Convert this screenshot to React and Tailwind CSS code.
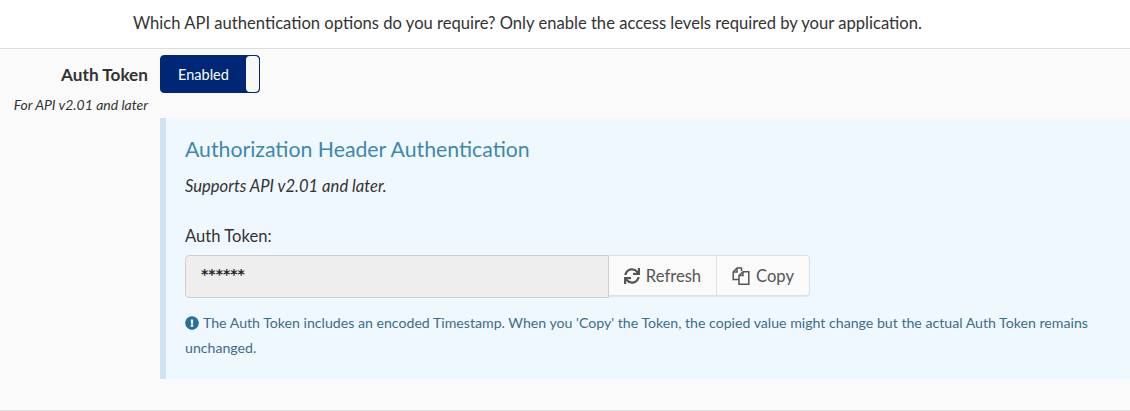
import React from 'react';
import { FaSync, FaExclamationCircle } from 'react-icons/fa';

function CopyIcon() {
  return (
    <svg width="18" height="18" viewBox="0 0 18 18" fill="none" stroke="currentColor" strokeWidth="1.5" className="shrink-0">
      <path d="M7 12.5H1.2V5L5 1h4.5v3" />
      <path d="M5 1.2V5H1.2" />
      <path d="M11 4.7h5.8v12.6H7V8.5z" />
      <path d="M11 4.9v3.6H7.2" />
    </svg>
  );
}

function App() {
  return (
    <div className="w-[1130px] h-[411px] bg-white overflow-hidden text-[#333] font-['Lato','Noto_Sans',sans-serif]">
      <div className="h-[49px] border-b border-[#dcdcdc] pl-[133px] pt-[12px] text-[16.6px] leading-[22px] text-[#333]">
        Which API authentication options do you require? Only enable the access levels required by your application.
      </div>
      <div className="h-[362px] bg-[#fafafa] border-b border-[#dcdcdc] flex">
        <div className="w-[148px] shrink-0 text-right">
          <div className="mt-[15px] text-[17.2px] leading-[22px] font-bold">Auth Token</div>
          <div className="mt-[10px] text-[14px] leading-[18px] italic">For API v2.01 and later</div>
        </div>
        <div className="flex-1 ml-[12px] pt-[6px]">
          <div className="w-[100px] h-[38px] flex rounded border border-[#002776] bg-[#002776] overflow-hidden">
            <div className="flex-1 text-white text-[14.5px] leading-[38px] text-center">Enabled</div>
            <div className="w-[13px] bg-[#f8f8f8] rounded"></div>
          </div>
          <div className="mt-[25px] h-[261px] border-l-[6px] border-[#cfe3f2] bg-[#f0f8ff] pl-[19px] pt-[18px]">
            <h4 className="text-[21.25px] leading-[26px] text-[#3f88ab]">Authorization Header Authentication</h4>
            <p className="mt-[13px] text-[16.6px] leading-[22px] italic">Supports API v2.01 and later.</p>
            <label className="block mt-[28px] text-[16.6px] leading-[22px]">Auth Token:</label>
            <div className="mt-[8px] flex items-stretch h-[43px]">
              <div className="w-[424px] h-[43px] bg-[#eeeeee] border border-[#cfcfcf] rounded-l pl-[15px] pt-[9px] text-[14px] leading-[18px] font-['DejaVu_Sans',sans-serif] font-bold text-[#222]">******</div>
              <div className="h-[41px] flex bg-[#fafafa] border border-[#dfdfdf] border-l-0 rounded-r shadow-[0_1px_1px_rgba(0,0,0,0.08)] text-[#555] text-[16.6px]">
                <div className="w-[108px] pt-[1px] flex items-center justify-center gap-[6px] border-r border-[#dfdfdf]">
                  <FaSync className="w-[16px] h-[16px]" />
                  <span>Refresh</span>
                </div>
                <div className="w-[92px] pt-[1px] flex items-center justify-center gap-[6px]">
                  <CopyIcon />
                  <span>Copy</span>
                </div>
              </div>
            </div>
            <p className="mt-[12px] w-[925px] text-[14.15px] leading-[25px] text-[#3d6c8a]">
              <FaExclamationCircle className="inline w-[14px] h-[14px] mr-[4px] -mt-[2px] text-[#2a6f97]" />
              The Auth Token includes an encoded Timestamp. When you 'Copy' the Token, the copied value might change but the actual Auth Token remains unchanged.
            </p>
          </div>
        </div>
      </div>
    </div>
  );
}

export default App;
